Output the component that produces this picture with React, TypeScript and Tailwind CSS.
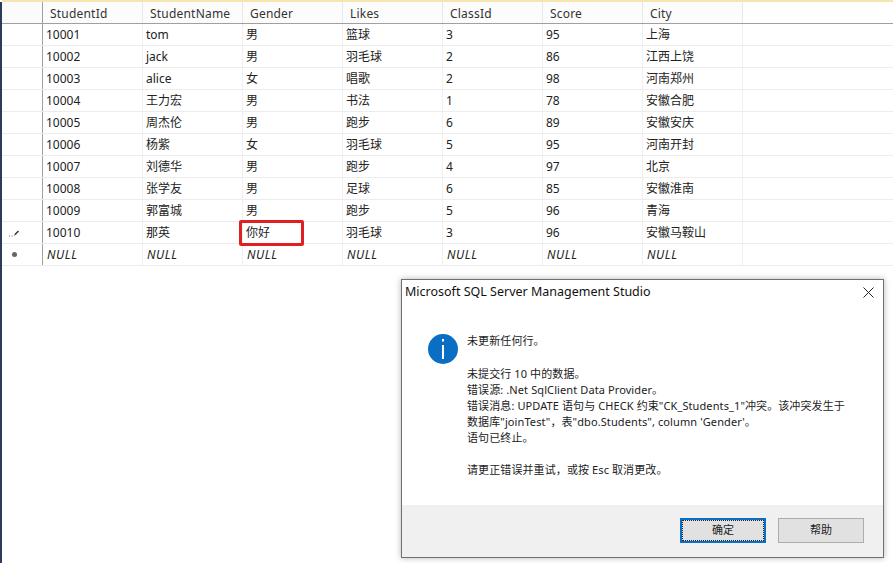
import React from "react";

const headers = ["StudentId", "StudentName", "Gender", "Likes", "ClassId", "Score", "City"];
const rows = [
  ["10001", "tom", "男", "篮球", "3", "95", "上海"],
  ["10002", "jack", "男", "羽毛球", "2", "86", "江西上饶"],
  ["10003", "alice", "女", "唱歌", "2", "98", "河南郑州"],
  ["10004", "王力宏", "男", "书法", "1", "78", "安徽合肥"],
  ["10005", "周杰伦", "男", "跑步", "6", "89", "安徽安庆"],
  ["10006", "杨紫", "女", "羽毛球", "5", "95", "河南开封"],
  ["10007", "刘德华", "男", "跑步", "4", "97", "北京"],
  ["10008", "张学友", "男", "足球", "6", "85", "安徽淮南"],
  ["10009", "郭富城", "男", "跑步", "5", "96", "青海"],
  ["10010", "那英", "你好", "羽毛球", "3", "96", "安徽马鞍山"],
];
const font = { fontFamily: '"Noto Sans", "Noto Sans CJK SC", sans-serif' };

export default function App() {
  return (
    <div className="relative w-[893px] h-[563px] overflow-hidden bg-white text-[12px] text-[#222]" style={font}>
      <div className="h-[2px] ml-[2px] bg-[#f5e6b0]" />
      <div className="flex h-[561px]">
        <div className="w-[2px] bg-[#2d3b5e]" />
        <div className="flex-1">
          <div className="flex h-[22px] border-b border-[#a0a0a0]">
            <div className="w-[41px] border-r border-[#a0a0a0] bg-[#fbfbfb]" />
            {headers.map((h) => (
              <div key={h} className="w-[100px] border-r border-[#e8e8e8] bg-[#fcfcfc] pl-[7px] leading-[23px] tracking-[0.2px] text-[#333]">{h}</div>
            ))}
          </div>
          {rows.map((r, i) => (
            <div key={r[0]} className="flex h-[22px] border-b border-[#ececec]">
              <div className="w-[41px] border-r border-[#a0a0a0] relative flex items-center justify-center">
                {i === 9 && (
                  <svg width="12" height="10" viewBox="0 0 12 10" className="ml-[-17px]">
                    <path d="M1 8h1M3.5 8h1" stroke="#666" strokeWidth="1" />
                    <path d="M6 8l1-2.5L10 2.5l1 1L8 6.5z" fill="#333" />
                  </svg>
                )}
              </div>
              {r.map((c, j) => (
                <div key={j} className="w-[100px] border-r border-[#f0f0f0] pl-[3px] leading-[22px] whitespace-nowrap">{c}</div>
              ))}
            </div>
          ))}
          <div className="flex h-[22px] border-b border-[#ececec]">
            <div className="w-[41px] border-r border-[#a0a0a0] flex items-center justify-center">
              <span className="w-[5px] h-[5px] rounded-full bg-[#666] ml-[-15px]" />
            </div>
            {headers.map((h) => (
              <div key={h} className="w-[100px] border-r border-[#f0f0f0] pl-[4px] leading-[22px] italic tracking-[0.6px]">NULL</div>
            ))}
          </div>
        </div>
      </div>

      <div className="absolute left-[239px] top-[220px] w-[65px] h-[26px] border-[3px] border-[#e02020] rounded-[2px]" />

      <div className="absolute left-[401px] top-[279px] w-[483px] h-[279px] bg-white border border-[#707070] shadow-[0_0_6px_rgba(0,0,0,0.3)] flex flex-col">
        <div className="flex h-[25px] items-center justify-between pl-[3px] pr-[9px] text-[12.5px] text-[#111]">
          <span>Microsoft SQL Server Management Studio</span>
          <svg width="11" height="11" viewBox="0 0 11 11"><path d="M0.5 0.5l10 10M10.5 0.5l-10 10" stroke="#222" strokeWidth="1" /></svg>
        </div>
        <div className="flex-1 flex pl-[26px] pt-[29px]">
          <div className="w-[30px] h-[30px] rounded-full bg-[#0a6fc4] flex items-center justify-center shrink-0">
            <svg width="4" height="20" viewBox="0 0 4 20"><rect x="1" y="0" width="2" height="2.5" fill="#fff" /><rect x="1" y="6" width="2" height="14" fill="#fff" /></svg>
          </div>
          <div className="ml-[9px] mt-[-1px] text-[11px] leading-[16px] text-[#222] tracking-[0.1px]">
            <div className="h-[16px]">未更新任何行。</div>
            <div className="h-[17px]" />
            <div>未提交行 10 中的数据。</div>
            <div>错误源: .Net SqlClient Data Provider。</div>
            <div>错误消息: UPDATE 语句与 CHECK 约束"CK_Students_1"冲突。该冲突发生于</div>
            <div>数据库"joinTest"，表"dbo.Students", column 'Gender'。</div>
            <div>语句已终止。</div>
            <div className="h-[16px]" />
            <div>请更正错误并重试，或按 Esc 取消更改。</div>
          </div>
        </div>
        <div className="h-[52px] bg-[#f0f0f0] flex items-start justify-end gap-[12px] pt-[13px] pr-[19px] text-[11px]">
          <div className="w-[86px] h-[25px] border-2 border-[#0a6fc4] bg-[#e1e1e1] flex items-center justify-center outline-1 outline-dotted outline-[#222] outline-offset-[-3px]">确定</div>
          <div className="w-[86px] h-[25px] border border-[#adadad] bg-[#e1e1e1] flex items-center justify-center">帮助</div>
        </div>
      </div>
    </div>
  );
}
